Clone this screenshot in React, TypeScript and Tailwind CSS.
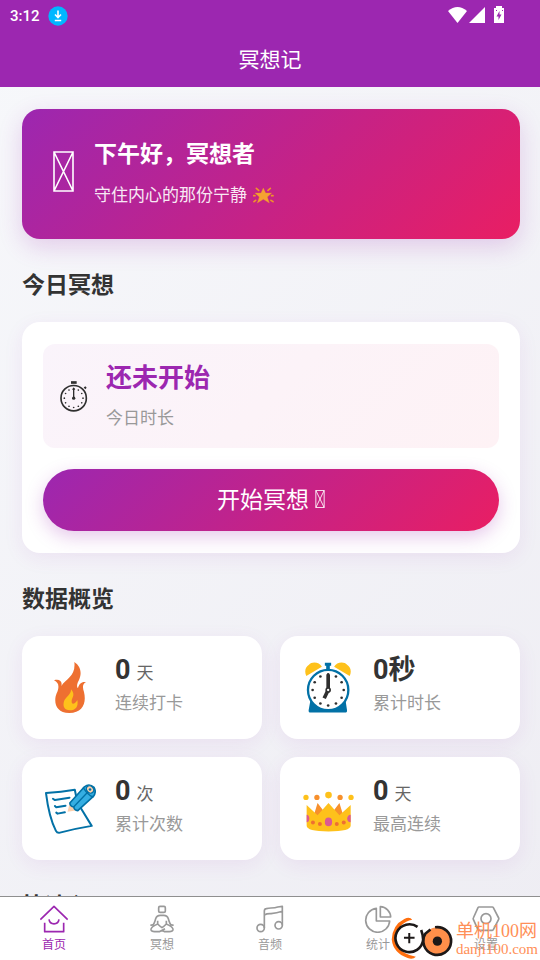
import type { ReactNode } from "react"

interface Stat {
  value: string
  unit?: string
  label: string
  icon: ReactNode
}

interface Tab {
  name: string
  icon: ReactNode
}

// Icons
const MissingGlyph = ({ className = "", stroke = 1 }: { className?: string; stroke?: number }) => (
  <svg viewBox="0 0 21 41" fill="none" stroke="currentColor" strokeWidth={stroke} className={className} aria-hidden="true">
    <path d="M1 1H20V40H1ZM1 1L20 40M20 1L1 40" />
  </svg>
)

const StarIcon = () => (
  <svg viewBox="0 0 63 51" className="h-[17px] w-[21px]" aria-hidden="true">
    <path
      d="M31 3L38 18L56 18L43 30L49 48L31 37L13 48L19 30L6 18L24 18Z"
      fill="#fbb028"
      stroke="#f09a20"
      strokeWidth="1"
    />
    <path
      d="M10 4L17 10M52 4L45 10M3 44L8 40M60 44L54 40M2 26H6M60 26H56"
      fill="none"
      stroke="#f5a01f"
      strokeWidth="5"
      strokeLinecap="round"
    />
  </svg>
)

const dialDots = (cx: number, cy: number, radius: number, size: number) =>
  Array.from({ length: 12 }, (_, i) => {
    const angle = (i * Math.PI) / 6
    return <circle key={i} cx={cx + radius * Math.sin(angle)} cy={cy - radius * Math.cos(angle)} r={size} />
  })

const StopwatchIcon = () => (
  <svg viewBox="0 0 84 92" className="h-[31px] w-7 shrink-0 text-[#2f2f2f]" fill="currentColor" aria-hidden="true">
    <rect x="33" y="0" width="17" height="8" />
    <circle cx="41" cy="51" r="38" fill="none" stroke="currentColor" strokeWidth="5" />
    <path d="M71 19L76 15L80 20L76 24Z" />
    {dialDots(41, 51, 28, 2.5)}
    <path d="M41 51V22" stroke="currentColor" strokeWidth="4" />
    <path d="M36 26L41 18L46 26Z" />
    <circle cx="41" cy="51" r="5" />
  </svg>
)

const FireIcon = () => (
  <svg viewBox="0 0 96 153" className="h-[51px] w-8" aria-hidden="true">
    <path
      d="M61 0C82 14 84 36 74 56C68 66 68 76 72 78C75 66 82 58 96 60C84 66 86 78 90 90C98 124 86 153 46 153C4 153 -2 118 8 94C16 76 16 62 0 55C16 50 26 58 22 72C36 50 66 44 61 0Z"
      fill="#ee7031"
    />
    <path
      d="M51 82C66 100 53 106 53 118C52 130 64 126 70 114C74 134 64 145 48 145C30 145 26 132 30 118C34 106 52 98 51 82Z"
      fill="#fec11b"
    />
  </svg>
)

const AlarmIcon = () => (
  <svg viewBox="0 0 139 153" className="h-[51px] w-[46px]" aria-hidden="true">
    <path d="M4 42C-3 26 2 14 12 8C20 -3 44 -1 51 14ZM135 42C142 26 137 14 127 8C119 -3 95 -1 88 14Z" fill="#fec11b" />
    <path d="M60 2H79V11H75V26H64V11H60ZM17 112L11 145Q10 152 17 152H121Q128 152 127 145L122 112Z" fill="#0271a6" />
    <circle cx="70" cy="84" r="61" fill="#fff" stroke="#0271a6" strokeWidth="7" />
    <g fill="#2f2f2f">{dialDots(70, 84, 47, 4)}</g>
    <path d="M70 84V37" stroke="#2f2f2f" strokeWidth="11" />
    <path d="M70 84L58 109" stroke="#2f2f2f" strokeWidth="11" />
    <circle cx="70" cy="84" r="6" fill="#fff" stroke="#2f2f2f" strokeWidth="5" />
  </svg>
)

const MemoIcon = () => (
  <svg viewBox="0 0 154 150" className="h-[50px] w-[51px]" strokeLinejoin="round" strokeLinecap="round" aria-hidden="true">
    <path
      d="M3 27Q50 24 90 17Q96 52 108 72L141 126Q92 134 42 147Q36 147 33 141Q12 100 3 27Z"
      fill="#fff"
      stroke="#0271a6"
      strokeWidth="6"
    />
    <path d="M24 44L30 48L74 41M30 66L34 70L62 65M34 86L38 89L60 85" fill="none" stroke="#0271a6" strokeWidth="6" />
    <path d="M75 57L68 83L98 79Z" fill="#fdd0ac" />
    <path d="M75 57L119 8Q134 -3 148 10Q156 24 146 37L99 80Q88 79 87 69Q76 68 75 57Z" fill="#35aee2" stroke="#0271a6" strokeWidth="5" />
    <path d="M87 68L128 25" fill="none" stroke="#0271a6" strokeWidth="4" />
    <path d="M116 11Q130 34 145 38" fill="none" stroke="#0271a6" strokeWidth="4" />
    <ellipse cx="136" cy="16" rx="10" ry="12" transform="rotate(-45 136 16)" fill="#fdd0ac" stroke="#0271a6" strokeWidth="4" />
    <circle cx="136" cy="16" r="4" fill="#0271a6" />
  </svg>
)

const CrownIcon = () => (
  <svg viewBox="0 -23 154 150" className="h-[50px] w-[51px]" aria-hidden="true">
    <path d="M44 34L34 66L50 80L64 60ZM110 34L120 66L104 80L90 60Z" fill="#f7902c" />
    <path d="M11 40L44 71L77 34L110 71L144 40V102Q144 120 77 120Q11 120 11 102Z" fill="#fec11b" />
    <g fill="#fec11b">
      <circle cx="9" cy="17" r="8" />
      <circle cx="77" cy="10" r="10" />
      <circle cx="145" cy="17" r="8" />
    </g>
    <g fill="#f7902c">
      <circle cx="42" cy="17" r="8" />
      <circle cx="112" cy="17" r="8" />
    </g>
    <path d="M11 69C22 69 22 92 11 92ZM144 69C130 69 130 92 144 92Z" fill="#db5a92" />
    <ellipse cx="77" cy="91" rx="11" ry="13" fill="#db5a92" />
    <g fill="#ee7031">
      <circle cx="30" cy="93" r="6" />
      <circle cx="51" cy="97" r="6" />
      <circle cx="102" cy="97" r="6" />
      <circle cx="123" cy="93" r="6" />
    </g>
  </svg>
)

const TabIcon = ({ children }: { children: ReactNode }) => (
  <svg
    viewBox="0 0 84 84"
    className="size-7"
    fill="none"
    stroke="currentColor"
    strokeWidth="5"
    strokeLinejoin="round"
    aria-hidden="true"
  >
    {children}
  </svg>
)

// Data
const STATS: Stat[] = [
  { value: "0", unit: "天", label: "连续打卡", icon: <FireIcon /> },
  { value: "0秒", label: "累计时长", icon: <AlarmIcon /> },
  { value: "0", unit: "次", label: "累计次数", icon: <MemoIcon /> },
  { value: "0", unit: "天", label: "最高连续", icon: <CrownIcon /> },
]

const TABS: Tab[] = [
  { name: "首页", icon: <path d="M1 44L42 4L83 44M14 53V80H71V53M27 43C30 61 54 61 57 43" /> },
  {
    name: "冥想",
    icon: (
      <path
        d="M36 4H48Q52 4 52 8V17Q52 22 47 22H37Q32 22 32 17V8Q32 4 36 4ZM29 57V47M55 57V47M7 60Q16 62 19 53Q22 46 23 41Q26 31 37 31H47Q58 31 61 41Q62 46 65 53Q68 62 77 60M29 57Q8 66 9 74Q10 80 20 80H34L51 71M55 57Q76 66 75 74Q74 80 64 80H50L42 76M29 57Q36 64 42 68Q48 64 55 57"
      />
    ),
  },
  {
    name: "音频",
    icon: (
      <>
        <circle cx="14" cy="69" r="11" />
        <circle cx="68" cy="61" r="11" />
        <path d="M25 69V18Q25 12 31 11Q38 9 45 9Q58 9 65 6L79 4V61M25 30Q34 25 45 26Q62 25 79 19" />
      </>
    ),
  },
  { name: "统计", icon: <path d="M37 10A36 36 0 1 0 77 48H37ZM49 5V36H80A32 32 0 0 0 49 5Z" /> },
  {
    name: "设置",
    icon: (
      <>
        <path d="M21 6H61Q63 6 64 8L80 39Q81 41 80 43L64 74Q63 76 61 76H21Q19 76 18 74L4 43Q3 41 4 39L18 8Q19 6 21 6Z" />
        <circle cx="42" cy="41" r="15" />
      </>
    ),
  },
]

const StatusBar = () => (
  <div className="flex h-[31px] items-center justify-between pr-[35px] pl-[10px]">
    <div className="flex items-center gap-2">
      <span className="font-[Roboto] text-[15px] leading-5 font-medium">3:12</span>
      <svg viewBox="0 0 20 20" className="size-5" aria-hidden="true">
        <circle cx="10" cy="10" r="9.7" fill="#00b7ff" />
        <path d="M10 4.5V11M7 8.5L10 11.5L13 8.5M6.8 14.5H13.2" fill="none" stroke="#fff" strokeWidth="1.6" />
      </svg>
    </div>
    <svg viewBox="0 0 57 18" className="mb-[2px] h-[18px] w-[57px]" fill="currentColor" aria-hidden="true">
      <path d="M0 5Q9.500-3 19 5L9.500 17Z" />
      <path d="M37 1V17H21Z" />
      <path d="M46 2H48V0H54V2H56V17H46Z" />
      <path d="M51.500 5L48.500 10.500H50.500V14L53.500 8.500H51.500ZM48 4H49V5H48ZM54 4H55V5H54Z" fill="#9c27b0" />
    </svg>
  </div>
)

const SectionTitle = ({ children }: { children: ReactNode }) => (
  <h2 className="mt-[30px] mb-[19px] text-[23px] leading-[34px] font-bold text-[#333]">{children}</h2>
)

const StatCard = ({ stat }: { stat: Stat }) => (
  <div className="flex items-center gap-[17px] rounded-[18px] bg-white py-4 pl-5 shadow-[0_5px_20px_rgba(156,39,176,0.08)]">
    <div className="flex w-14 shrink-0 justify-center">{stat.icon}</div>
    <div className="pb-2">
      <p className="flex items-baseline gap-[6px] text-[27px] leading-9 font-bold text-[#333]">
        {stat.value}
        {stat.unit && <span className="text-[17px] leading-5 font-normal text-[#666]">{stat.unit}</span>}
      </p>
      <p className="mt-[3px] text-[17px] leading-6 text-[#999]">{stat.label}</p>
    </div>
  </div>
)

const Watermark = () => (
  <div className="pointer-events-none absolute right-[2px] bottom-0 flex items-center gap-[2px]">
    <svg viewBox="0 0 190 130" className="h-[43px] w-[63px]" fill="none" aria-hidden="true">
      <path d="M64 8Q56-2 40 6Q4 24 2 68Q6 108 50 124Q66 130 75 120Q36 114 18 88Q2 54 32 24Q44 12 64 8Z" fill="#ff6f0f" />
      <circle cx="55" cy="64" r="43" fill="#fff" />
      <circle cx="140" cy="73" r="42" fill="#ff8f4a" />
      <path d="M80 30A42 42 0 1 0 97 69Q97 54 91 39" stroke="#1c1818" strokeWidth="8" />
      <path d="M55 48V79M39 63H71" stroke="#1c1818" strokeWidth="6" />
      <path d="M133 31A42 42 0 1 1 104 50L119 38" stroke="#1c1818" strokeWidth="8" />
      <circle cx="140" cy="73" r="14" fill="#1c1818" />
    </svg>
    <div className="font-['Liberation_Serif','Noto_Sans_CJK_SC',serif] text-[#ff8f57]">
      <p className="text-[18px] leading-5">单机100网</p>
      <p className="text-[15px] leading-4">danji100.com</p>
    </div>
  </div>
)

export default function App() {
  return (
    <div className="relative flex h-screen flex-col overflow-hidden bg-linear-135 from-[#f7f8fb] to-[#eeedf3] font-[Roboto,'Noto_Sans_CJK_SC',sans-serif]">
      <header className="shrink-0 bg-[#9c27b0] text-white">
        <StatusBar />
        <h1 className="pt-[2px] text-center text-[21px] leading-[54px]">冥想记</h1>
      </header>

      <main className="min-h-0 flex-1 overflow-hidden pt-[22px] pr-5 pl-[22px]">
        {/* Greeting */}
        <section className="flex items-center rounded-[18px] bg-[linear-gradient(135deg,#9c27b0,#e91e63)] pt-[30px] pb-[31px] pl-[31px] text-white shadow-[0_8px_24px_rgba(156,39,176,0.2)]">
          <MissingGlyph className="mb-1 h-[41px] w-[21px] shrink-0" stroke={1.6} />
          <div className="ml-5">
            <p className="text-[23px] leading-8 font-bold">下午好，冥想者</p>
            <p className="mt-[11px] flex items-center gap-[6px] text-[17px] leading-[26px] opacity-90">
              守住内心的那份宁静
              <StarIcon />
            </p>
          </div>
        </section>

        <SectionTitle>今日冥想</SectionTitle>
        <section className="rounded-[18px] bg-white px-[21px] py-[22px] shadow-[0_5px_20px_rgba(156,39,176,0.08)]">
          <div className="flex items-center gap-[18px] rounded-xl bg-linear-135 from-[#faf4fb] to-[#fef2f5] pt-[17px] pb-4 pl-[17px]">
            <StopwatchIcon />
            <div>
              <p className="text-[26px] leading-[34px] font-bold text-[#9c27b0]">还未开始</p>
              <p className="mt-[9px] text-[17px] leading-7 text-[#999]">今日时长</p>
            </div>
          </div>
          <button
            type="button"
            className="mt-[21px] flex w-full items-center justify-center gap-[6px] rounded-full bg-[linear-gradient(135deg,#9c27b0,#e91e63)] pt-[2px] text-[23px] leading-[60px] text-white shadow-[0_6px_18px_rgba(156,39,176,0.25)]"
          >
            开始冥想
            <MissingGlyph className="mb-1 h-[18px] w-[10px]" stroke={2} />
          </button>
        </section>

        <SectionTitle>数据概览</SectionTitle>
        <section className="grid grid-cols-2 gap-[18px]">
          {STATS.map(stat => (
            <StatCard key={stat.label} stat={stat} />
          ))}
        </section>

        <SectionTitle>快速入口</SectionTitle>
      </main>

      <nav className="grid shrink-0 grid-cols-5 border-t border-[#8f8f8f] bg-white" aria-label="底部导航">
        {TABS.map((tab, i) => (
          <button
            key={tab.name}
            type="button"
            className={`flex flex-col items-center gap-1 pt-2 pb-[7px] text-[12px] leading-4 ${i === 0 ? "text-[#9c27b0]" : "text-[#999]"}`}
            aria-current={i === 0 ? "page" : undefined}
          >
            <TabIcon>{tab.icon}</TabIcon>
            {tab.name}
          </button>
        ))}
      </nav>

      <Watermark />
    </div>
  )
}
